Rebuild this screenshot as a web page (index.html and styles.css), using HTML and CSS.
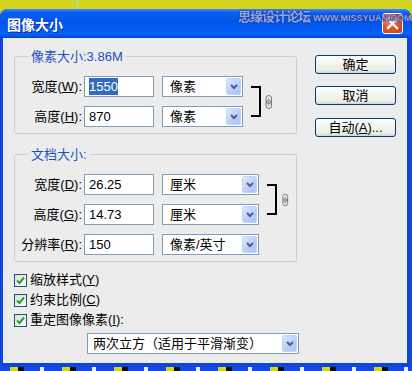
FILE: index.html
```html
<!DOCTYPE html>
<html lang="zh-CN">
<head>
<meta charset="utf-8">
<title>图像大小</title>
<link rel="stylesheet" href="styles.css">
</head>
<body>
<div class="desktop">
  <div class="window">
    <div class="titlebar">
      <span class="title">图像大小</span>
      <span class="close"><svg width="13" height="13" viewBox="0 0 13 13"><path d="M2 2 L11 11 M11 2 L2 11" stroke="#fff" stroke-width="2.4" stroke-linecap="square"/></svg></span>
    </div>
    <div class="client">
      <div class="left">
        <fieldset class="group g1">
          <legend>像素大小:3.86M</legend>
          <div class="grid">
            <label class="lbl r1">宽度(<u>W</u>):</label>
            <div class="input r1"><span class="hl">1550</span></div>
            <div class="combo r1"><span class="val">像素</span><span class="arrow"><svg width="8" height="6" viewBox="0 0 8 6"><path d="M1 1 L4 4 L7 1" stroke="#4d6185" stroke-width="2" fill="none"/></svg></span></div>
            <div class="bracket"></div>
            <div class="chain"><svg width="8" height="14" viewBox="0 0 8 14"><rect x="1" y="0.5" width="5.5" height="8" rx="2.7" fill="#f4f4f4" stroke="#6a6a6a"/><rect x="1" y="5.5" width="5.5" height="8" rx="2.7" fill="none" stroke="#6a6a6a"/><path d="M3.75 3 V11" stroke="#8a8a8a"/></svg></div>
            <label class="lbl r2">高度(<u>H</u>):</label>
            <div class="input r2">870</div>
            <div class="combo r2"><span class="val">像素</span><span class="arrow"><svg width="8" height="6" viewBox="0 0 8 6"><path d="M1 1 L4 4 L7 1" stroke="#4d6185" stroke-width="2" fill="none"/></svg></span></div>
          </div>
        </fieldset>

        <fieldset class="group g2">
          <legend>文档大小:</legend>
          <div class="grid">
            <label class="lbl r1">宽度(<u>D</u>):</label>
            <div class="input r1">26.25</div>
            <div class="combo r1"><span class="val">厘米</span><span class="arrow"><svg width="8" height="6" viewBox="0 0 8 6"><path d="M1 1 L4 4 L7 1" stroke="#4d6185" stroke-width="2" fill="none"/></svg></span></div>
            <div class="bracket"></div>
            <div class="chain"><svg width="8" height="14" viewBox="0 0 8 14"><rect x="1" y="0.5" width="5.5" height="8" rx="2.7" fill="#f4f4f4" stroke="#6a6a6a"/><rect x="1" y="5.5" width="5.5" height="8" rx="2.7" fill="none" stroke="#6a6a6a"/><path d="M3.75 3 V11" stroke="#8a8a8a"/></svg></div>
            <label class="lbl r2">高度(<u>G</u>):</label>
            <div class="input r2">14.73</div>
            <div class="combo r2"><span class="val">厘米</span><span class="arrow"><svg width="8" height="6" viewBox="0 0 8 6"><path d="M1 1 L4 4 L7 1" stroke="#4d6185" stroke-width="2" fill="none"/></svg></span></div>
            <label class="lbl r3">分辨率(<u>R</u>):</label>
            <div class="input r3">150</div>
            <div class="combo r3"><span class="val">像素/英寸</span><span class="arrow"><svg width="8" height="6" viewBox="0 0 8 6"><path d="M1 1 L4 4 L7 1" stroke="#4d6185" stroke-width="2" fill="none"/></svg></span></div>
          </div>
        </fieldset>

        <div class="checks">
          <div class="check"><span class="cb"><svg width="9" height="9" viewBox="0 0 9 9"><path d="M1 4.5 L3.5 7 L8 1.5" stroke="#21a121" stroke-width="2" fill="none"/></svg></span><span>缩放样式(<u>Y</u>)</span></div>
          <div class="check"><span class="cb"><svg width="9" height="9" viewBox="0 0 9 9"><path d="M1 4.5 L3.5 7 L8 1.5" stroke="#21a121" stroke-width="2" fill="none"/></svg></span><span>约束比例(<u>C</u>)</span></div>
          <div class="check"><span class="cb"><svg width="9" height="9" viewBox="0 0 9 9"><path d="M1 4.5 L3.5 7 L8 1.5" stroke="#21a121" stroke-width="2" fill="none"/></svg></span><span>重定图像像素(<u>I</u>):</span></div>
        </div>
        <div class="combo wide"><span class="val">两次立方（适用于平滑渐变）</span><span class="arrow"><svg width="8" height="6" viewBox="0 0 8 6"><path d="M1 1 L4 4 L7 1" stroke="#4d6185" stroke-width="2" fill="none"/></svg></span></div>
      </div>
      <div class="buttons">
        <button class="btn">确定</button>
        <button class="btn">取消</button>
        <button class="btn auto">自动(<u>A</u>)...</button>
      </div>
    </div>
  </div>
  <div class="watermark"><span class="wm-cn">思缘设计论坛</span><span class="wm-en">WWW.MISSYUAN.COM</span></div>
</div>
</body>
</html>
```

FILE: styles.css
```css
* { box-sizing: border-box; }
html, body { margin: 0; padding: 0; }
body {
  width: 412px;
  height: 371px;
  overflow: hidden;
  font-family: "Liberation Sans", "Noto Sans CJK SC", sans-serif;
  font-size: 13px;
  color: #000;
}
.desktop {
  position: relative;
  height: 371px;
  padding-top: 9px;
  background:
    linear-gradient(#7fe6e6, #7fe6e6) 77px 0 / 1px 9px no-repeat,
    linear-gradient(#d2d41f, #d2d41f) 0 0 / 100% 20px no-repeat,
    repeating-linear-gradient(90deg, #1d48e0 0 10px, #d6d61e 10px 18px, #101010 18px 24px, #1d48e0 24px 40px, #e9eefa 40px 44px, #1d48e0 44px 52px) 0 100% / 100% 5px no-repeat,
    #1d46dc;
}
.window {
  width: 411px;
  border-radius: 8px 8px 0 0;
  background: #0c46dc;
  overflow: hidden;
}
.titlebar {
  height: 29px;
  display: flex;
  align-items: center;
  justify-content: space-between;
  padding: 0 8px 0 7px;
  background: linear-gradient(to bottom, #3d8fff 0%, #0c5ff2 12%, #0054ea 45%, #0861f7 85%, #0053e8 94%, #0043d2 100%);
}
.title {
  color: #fff;
  font-family: "Noto Sans CJK SC", sans-serif;
  font-weight: bold;
  font-size: 14px;
  line-height: 16px;
  text-shadow: 1px 1px 0 #0a2a8c;
}
.close {
  width: 21px;
  height: 21px;
  border: 1px solid #fff;
  border-radius: 3px;
  background: radial-gradient(circle at 35% 30%, #f0906c 0%, #e0582e 45%, #c83a12 100%);
  display: flex;
  align-items: center;
  justify-content: center;
}
.client {
  margin: 0 4px 4px 3px;
  height: 325px;
  background: #ececec;
  display: flex;
  gap: 18px;
  padding: 10px 11px 0 11px;
}
.left {
  width: 283px;
  display: flex;
  flex-direction: column;
}
.group {
  margin: 0;
  padding: 0 0 6px 0;
  border: 1px solid #cdcdcd;
  border-radius: 3px;
  min-width: 0;
}
.group legend {
  margin-left: 13px;
  padding: 0 3px;
  color: #1f4fc4;
  line-height: 17px;
  font-size: 13px;
}
.g2 { margin-top: 12px; }
.grid {
  display: grid;
  grid-template-rows: 21px 21px;
  row-gap: 9px;
  margin-top: 11px;
  align-items: center;
}
.g1 .grid { grid-template-columns: 69px 70px 89px 18px 12px; }
.g2 .grid { grid-template-columns: 69px 70px 105px 18px 12px; grid-template-rows: 21px 21px 21px; }
.lbl {
  grid-column: 1;
  text-align: right;
  padding-right: 2px;
  line-height: 21px;
  white-space: nowrap;
}
.r1 { grid-row: 1; }
.r2 { grid-row: 2; }
.r3 { grid-row: 3; }
.input {
  grid-column: 2;
  height: 21px;
  border: 1px solid #7f9db9;
  background: #fff;
  padding-left: 4px;
  line-height: 19px;
  white-space: nowrap;
}
.hl {
  background: #316ac5;
  color: #fff;
  padding: 1px 0;
}
.combo {
  height: 21px;
  border: 1px solid #7f9db9;
  background: #fff;
  display: flex;
  align-items: center;
  justify-content: space-between;
  padding: 0 1px 0 7px;
  white-space: nowrap;
}
.grid .combo { grid-column: 3; margin-left: 8px; }
.combo .val { line-height: 19px; }
.arrow {
  width: 15px;
  height: 17px;
  border-radius: 2px;
  border: 1px solid #c3d3f8;
  background: linear-gradient(135deg, #dfe8fd 0%, #bccff8 55%, #aec4f5 100%);
  display: flex;
  align-items: center;
  justify-content: center;
}
.bracket {
  grid-column: 4;
  grid-row: 1 / span 2;
  align-self: stretch;
  margin: 10px 0 10px 8px;
  border: 2px solid #000;
  border-left: none;
}
.chain {
  grid-column: 5;
  grid-row: 1 / span 2;
  align-self: center;
  margin-left: 4px;
  display: flex;
}
.g2 .chain { margin-left: 5px; }
.checks {
  margin-top: 8px;
  display: flex;
  flex-direction: column;
}
.check {
  height: 20px;
  display: flex;
  align-items: center;
  gap: 3px;
  line-height: 20px;
}
.cb {
  width: 13px;
  height: 13px;
  border: 1px solid #1c5180;
  background: linear-gradient(135deg, #dcdcd7, #ffffff);
  display: flex;
  align-items: center;
  justify-content: center;
}
.combo.wide {
  width: 212px;
  margin-left: 73px;
  margin-top: 3px;
  padding-left: 5px;
}
.buttons {
  width: 81px;
  display: flex;
  flex-direction: column;
  padding-top: 7px;
}
.btn {
  width: 81px;
  height: 19px;
  margin: 0 0 12px 0;
  padding: 0;
  border: 1px solid #003c74;
  border-radius: 3px;
  background: linear-gradient(to bottom, #ffffff 0%, #f4f4f0 40%, #ecebe6 85%, #d6d0c5 100%);
  font-family: "Liberation Sans", "Noto Sans CJK SC", sans-serif;
  font-size: 13px;
  line-height: 17px;
  color: #000;
}
.btn.auto { margin-top: 1px; }
.watermark {
  position: absolute;
  top: 8px;
  left: 238px;
  width: 172px;
  white-space: nowrap;
  display: flex;
  align-items: baseline;
  gap: 3px;
  color: #93a8e6;
  text-shadow: 0 0 1px #142a86, 0 0 1px #142a86, 0 0 1px #142a86;
}
.wm-cn {
  font-family: "Noto Sans CJK SC", sans-serif;
  font-size: 13px;
  font-weight: bold;
  line-height: 15px;
  letter-spacing: -1px;
  flex: none;
}
.wm-en {
  font-family: "Liberation Sans", sans-serif;
  font-size: 9px;
  font-weight: bold;
  line-height: 11px;
  flex: none;
}
```
